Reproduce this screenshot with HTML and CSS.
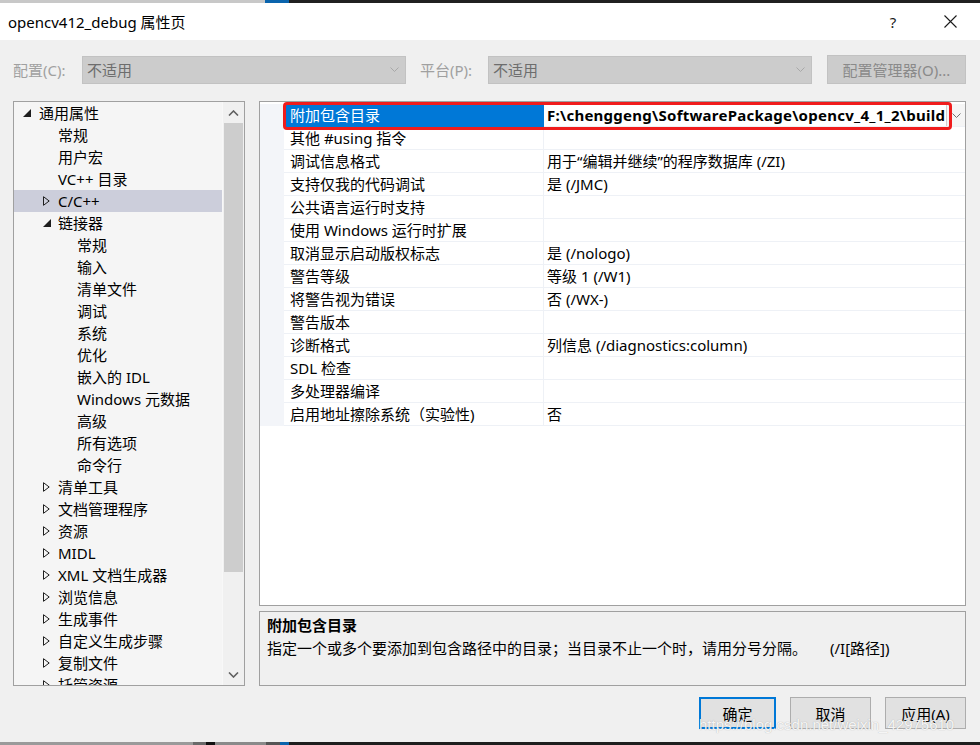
FILE: index.html
```html
<!DOCTYPE html>
<html lang="zh-CN">
<head>
<meta charset="utf-8">
<title>opencv412_debug 属性页</title>
<link rel="stylesheet" href="styles.css">
</head>
<body>
<div class="screen">
  <div class="strip-top"></div>
  <div class="titlebar">
    <span class="title">opencv412_debug 属性页</span>
    <span class="tb-help">?</span>
    <span class="tb-close"><svg width="13" height="13" viewBox="0 0 13 13"><path d="M0.5 0.5 L12.5 12.5 M12.5 0.5 L0.5 12.5" stroke="#1a1a1a" stroke-width="1.1" fill="none"/></svg></span>
  </div>
  <div class="dialog">
    <div class="toolbar">
      <span class="lbl lbl-cfg">配置(C):</span>
      <div class="combo"><span>不适用</span><svg class="chev" width="9" height="5" viewBox="0 0 9 5"><path d="M0.5 0.5 L4.5 4.5 L8.5 0.5" stroke="#a8a8a8" fill="none"/></svg></div>
      <span class="lbl lbl-plat">平台(P):</span>
      <div class="combo"><span>不适用</span><svg class="chev" width="9" height="5" viewBox="0 0 9 5"><path d="M0.5 0.5 L4.5 4.5 L8.5 0.5" stroke="#a8a8a8" fill="none"/></svg></div>
      <div class="btn-cfgmgr">配置管理器(O)...</div>
    </div>
    <div class="content">
      <div class="tree">
        <div class="tree-list">
          <div class="node l0"><span class="arr"><svg width="8" height="8" viewBox="0 0 8 8"><path d="M0 8 L8 8 L8 0 Z" fill="#1e1e1e"/></svg></span>通用属性</div>
          <div class="node l1"><span class="arr"></span>常规</div>
          <div class="node l1"><span class="arr"></span>用户宏</div>
          <div class="node l1"><span class="arr"></span>VC++ 目录</div>
          <div class="node l1 sel"><span class="arr"><svg width="7" height="10" viewBox="0 0 7 10"><path d="M0.5 0.7 L6.2 5 L0.5 9.3 Z" fill="none" stroke="#1e1e1e" stroke-width="1"/></svg></span>C/C++</div>
          <div class="node l1"><span class="arr"><svg width="8" height="8" viewBox="0 0 8 8"><path d="M0 8 L8 8 L8 0 Z" fill="#1e1e1e"/></svg></span>链接器</div>
          <div class="node l2"><span class="arr"></span>常规</div>
          <div class="node l2"><span class="arr"></span>输入</div>
          <div class="node l2"><span class="arr"></span>清单文件</div>
          <div class="node l2"><span class="arr"></span>调试</div>
          <div class="node l2"><span class="arr"></span>系统</div>
          <div class="node l2"><span class="arr"></span>优化</div>
          <div class="node l2"><span class="arr"></span>嵌入的 IDL</div>
          <div class="node l2"><span class="arr"></span>Windows 元数据</div>
          <div class="node l2"><span class="arr"></span>高级</div>
          <div class="node l2"><span class="arr"></span>所有选项</div>
          <div class="node l2"><span class="arr"></span>命令行</div>
          <div class="node l1"><span class="arr"><svg width="7" height="10" viewBox="0 0 7 10"><path d="M0.5 0.7 L6.2 5 L0.5 9.3 Z" fill="none" stroke="#1e1e1e" stroke-width="1"/></svg></span>清单工具</div>
          <div class="node l1"><span class="arr"><svg width="7" height="10" viewBox="0 0 7 10"><path d="M0.5 0.7 L6.2 5 L0.5 9.3 Z" fill="none" stroke="#1e1e1e" stroke-width="1"/></svg></span>文档管理程序</div>
          <div class="node l1"><span class="arr"><svg width="7" height="10" viewBox="0 0 7 10"><path d="M0.5 0.7 L6.2 5 L0.5 9.3 Z" fill="none" stroke="#1e1e1e" stroke-width="1"/></svg></span>资源</div>
          <div class="node l1"><span class="arr"><svg width="7" height="10" viewBox="0 0 7 10"><path d="M0.5 0.7 L6.2 5 L0.5 9.3 Z" fill="none" stroke="#1e1e1e" stroke-width="1"/></svg></span>MIDL</div>
          <div class="node l1"><span class="arr"><svg width="7" height="10" viewBox="0 0 7 10"><path d="M0.5 0.7 L6.2 5 L0.5 9.3 Z" fill="none" stroke="#1e1e1e" stroke-width="1"/></svg></span>XML 文档生成器</div>
          <div class="node l1"><span class="arr"><svg width="7" height="10" viewBox="0 0 7 10"><path d="M0.5 0.7 L6.2 5 L0.5 9.3 Z" fill="none" stroke="#1e1e1e" stroke-width="1"/></svg></span>浏览信息</div>
          <div class="node l1"><span class="arr"><svg width="7" height="10" viewBox="0 0 7 10"><path d="M0.5 0.7 L6.2 5 L0.5 9.3 Z" fill="none" stroke="#1e1e1e" stroke-width="1"/></svg></span>生成事件</div>
          <div class="node l1"><span class="arr"><svg width="7" height="10" viewBox="0 0 7 10"><path d="M0.5 0.7 L6.2 5 L0.5 9.3 Z" fill="none" stroke="#1e1e1e" stroke-width="1"/></svg></span>自定义生成步骤</div>
          <div class="node l1"><span class="arr"><svg width="7" height="10" viewBox="0 0 7 10"><path d="M0.5 0.7 L6.2 5 L0.5 9.3 Z" fill="none" stroke="#1e1e1e" stroke-width="1"/></svg></span>复制文件</div>
          <div class="node l1"><span class="arr"><svg width="7" height="10" viewBox="0 0 7 10"><path d="M0.5 0.7 L6.2 5 L0.5 9.3 Z" fill="none" stroke="#1e1e1e" stroke-width="1"/></svg></span>托管资源</div>
        </div>
        <div class="vscroll">
          <div class="sb-btn"><svg width="11" height="6" viewBox="0 0 11 6"><path d="M1 5.5 L5.5 1 L10 5.5" stroke="#606060" stroke-width="1.6" fill="none"/></svg></div>
          <div class="sb-track"><div class="sb-thumb"></div></div>
          <div class="sb-btn"><svg width="11" height="6" viewBox="0 0 11 6"><path d="M1 0.5 L5.5 5 L10 0.5" stroke="#606060" stroke-width="1.6" fill="none"/></svg></div>
        </div>
      </div>
      <div class="right">
        <div class="grid">
          <div class="grid-rows">
            <div class="prow psel"><div class="pm"></div><div class="pn">附加包含目录</div><div class="pv"><span class="pv-text">F:\chenggeng\SoftwarePackage\opencv_4_1_2\build</span><span class="ddbtn"><svg width="9" height="5" viewBox="0 0 9 5"><path d="M0.5 0.5 L4.5 4.5 L8.5 0.5" stroke="#707070" fill="none"/></svg></span></div></div>
            <div class="prow"><div class="pm"></div><div class="pn">其他 #using 指令</div><div class="pv"></div></div>
            <div class="prow"><div class="pm"></div><div class="pn">调试信息格式</div><div class="pv">用于“编辑并继续”的程序数据库 (/ZI)</div></div>
            <div class="prow"><div class="pm"></div><div class="pn">支持仅我的代码调试</div><div class="pv">是 (/JMC)</div></div>
            <div class="prow"><div class="pm"></div><div class="pn">公共语言运行时支持</div><div class="pv"></div></div>
            <div class="prow"><div class="pm"></div><div class="pn">使用 Windows 运行时扩展</div><div class="pv"></div></div>
            <div class="prow"><div class="pm"></div><div class="pn">取消显示启动版权标志</div><div class="pv">是 (/nologo)</div></div>
            <div class="prow"><div class="pm"></div><div class="pn">警告等级</div><div class="pv">等级 1 (/W1)</div></div>
            <div class="prow"><div class="pm"></div><div class="pn">将警告视为错误</div><div class="pv">否 (/WX-)</div></div>
            <div class="prow"><div class="pm"></div><div class="pn">警告版本</div><div class="pv"></div></div>
            <div class="prow"><div class="pm"></div><div class="pn">诊断格式</div><div class="pv">列信息 (/diagnostics:column)</div></div>
            <div class="prow"><div class="pm"></div><div class="pn">SDL 检查</div><div class="pv"></div></div>
            <div class="prow"><div class="pm"></div><div class="pn">多处理器编译</div><div class="pv"></div></div>
            <div class="prow"><div class="pm"></div><div class="pn">启用地址擦除系统（实验性)</div><div class="pv">否</div></div>
          </div>
          <div class="redmark"></div>
        </div>
        <div class="desc">
          <div class="desc-title">附加包含目录</div>
          <div class="desc-text">指定一个或多个要添加到包含路径中的目录；当目录不止一个时，请用分号分隔。<span class="desc-sw">(/I[路径])</span></div>
        </div>
      </div>
    </div>
    <div class="footer">
      <div class="btn btn-default">确定</div>
      <div class="btn">取消</div>
      <div class="btn">应用(A)</div>
    </div>
    <div class="watermark">https://blog.csdn.net/weixin_42975610</div>
  </div>
  <div class="strip-bottom"></div>
</div>
</body>
</html>
```

FILE: styles.css
```css
* { box-sizing: border-box; }
html, body { margin: 0; padding: 0; }
body {
  width: 980px;
  height: 745px;
  overflow: hidden;
  background: #f0f0f0;
  font-family: "Noto Sans", "Noto Sans CJK SC", sans-serif;
  font-size: 15px;
  color: #000;
}
.screen { width: 980px; height: 745px; display: flex; flex-direction: column; position: relative; }

.strip-top {
  height: 3px;
  flex: none;
  background: linear-gradient(to right, #c8c8c8 0, #c8c8c8 265px, #0a64ad 265px, #0a64ad 289px, #202020 289px, #202020 100%);
}
.titlebar {
  height: 37px;
  flex: none;
  background: #fff;
  display: flex;
  align-items: center;
  padding-left: 8px;
}
.title { flex: 1; font-size: 15px; color: #000; }
.tb-help { width: 20px; text-align: center; margin-right: 37px; font-size: 15px; color: #1a1a1a; }
.tb-close { width: 20px; margin-right: 20px; display: flex; justify-content: center; }

.dialog { flex: 1; position: relative; display: flex; flex-direction: column; }

.toolbar {
  margin-top: 15px;
  height: 29px;
  display: flex;
  align-items: center;
  padding-left: 13px;
}
.lbl { color: #a0a0a0; font-size: 15px; white-space: nowrap; flex: none; }
.lbl-cfg { width: 69px; }
.lbl-plat { width: 68px; margin-left: 14px; }
.combo {
  width: 324px;
  flex: none;
  height: 28px;
  background: #cccccc;
  border: 1px solid #c2c2c2;
  display: flex;
  align-items: center;
  justify-content: space-between;
  padding: 0 6px 0 4px;
  color: #6d6d6d;
}
.btn-cfgmgr {
  margin-left: 15px;
  width: 139px;
  flex: none;
  height: 29px;
  background: #cccccc;
  border: 1px solid #c2c2c2;
  color: #8a8a8a;
  display: flex;
  align-items: center;
  justify-content: center;
  white-space: nowrap;
}

.content {
  margin-top: 17px;
  display: flex;
  gap: 14px;
  padding-left: 13px;
}
.tree {
  width: 232px;
  height: 585px;
  border: 1px solid #a0a0a0;
  background: #f5f5f5;
  display: flex;
  overflow: hidden;
}
.tree-list { flex: 1; overflow: hidden; }
.node {
  height: 22px;
  line-height: 22px;
  display: flex;
  align-items: center;
  white-space: nowrap;
}
.node.sel { background: #cccedb; }
.arr { width: 19px; height: 22px; display: flex; align-items: center; justify-content: flex-start; padding-left: 5px; }
.node.l0 { padding-left: 3px; }
.node.l0 .arr { padding-left: 6px; width: 22px; }
.node.l1 { padding-left: 25px; }
.node.l1 .arr { padding-left: 4px; width: 19px; }
.node.l2 { padding-left: 44px; }

.vscroll {
  width: 22px;
  flex: none;
  background: #f0f0f0;
  display: flex;
  flex-direction: column;
  border-left: 1px solid #f8f8f8;
}
.sb-btn { height: 21px; display: flex; align-items: center; justify-content: center; flex: none; }
.sb-track { flex: 1; padding: 0 1px; }
.sb-thumb { height: 449px; background: #cdcdcd; }

.right { width: 707px; display: flex; flex-direction: column; gap: 5px; }
.grid {
  height: 505px;
  border: 1px solid #a0a0a0;
  background: #fff;
  position: relative;
  padding-top: 2px;
}
.prow {
  height: 23px;
  display: flex;
  line-height: 22px;
}
.pm { width: 24px; flex: none; background: #f3f5f9; }
.pn {
  width: 260px;
  flex: none;
  padding-left: 6px;
  border-bottom: 1px solid #eef1f6;
  border-right: 1px solid #eef1f6;
  white-space: nowrap;
  overflow: hidden;
}
.pv {
  flex: 1;
  padding-left: 3px;
  border-bottom: 1px solid #eef1f6;
  white-space: nowrap;
  overflow: hidden;
  display: flex;
}
.psel .pn { background: #0078d7; color: #fff; border-color: #0078d7; }
.psel .pv-text { font-weight: bold; flex: 1; overflow: hidden; white-space: nowrap; letter-spacing: 0.25px; }
.ddbtn {
  width: 19px;
  flex: none;
  border-left: 1px solid #d0d0d0;
  display: flex;
  align-items: center;
  justify-content: center;
  background: #f5f5f5;
}
.redmark {
  position: absolute;
  left: 23px;
  top: 0px;
  width: 669px;
  height: 28px;
  border: 3px solid #f01c1c;
  border-radius: 4px;
  pointer-events: none;
}

.desc {
  height: 75px;
  border: 1px solid #a0a0a0;
  background: #f0f0f0;
  padding: 2px 7px 0 7px;
}
.desc-title { font-weight: bold; height: 22px; line-height: 22px; }
.desc-text { height: 24px; line-height: 24px; white-space: nowrap; }
.desc-sw { margin-left: 23px; }

.footer {
  margin-top: 11px;
  display: flex;
  justify-content: flex-end;
  gap: 14px;
  padding-right: 14px;
}
.btn {
  width: 81px;
  height: 32px;
  background: #e1e1e1;
  border: 1px solid #adadad;
  display: flex;
  align-items: center;
  justify-content: center;
}
.btn-default { border: 2px solid #0078d7; width: 77px; }
.watermark {
  position: absolute;
  left: 699px;
  top: 676px;
  font-family: "Liberation Sans", sans-serif;
  font-size: 15px;
  color: rgba(255, 255, 255, 0.9);
  text-shadow: 0 0 1px rgba(120, 120, 120, 0.6);
  white-space: nowrap;
  pointer-events: none;
}
.strip-bottom {
  height: 3px;
  flex: none;
  background: linear-gradient(to right, #9a9a9a 0, #9a9a9a 193px, #6a6a6a 193px, #6a6a6a 206px, #111 206px, #111 215px, #8a8a8a 215px, #8a8a8a 266px, #555 266px, #555 280px, #0a64ad 280px, #0a64ad 289px, #1e1e1e 289px, #1e1e1e 100%);
}
```
